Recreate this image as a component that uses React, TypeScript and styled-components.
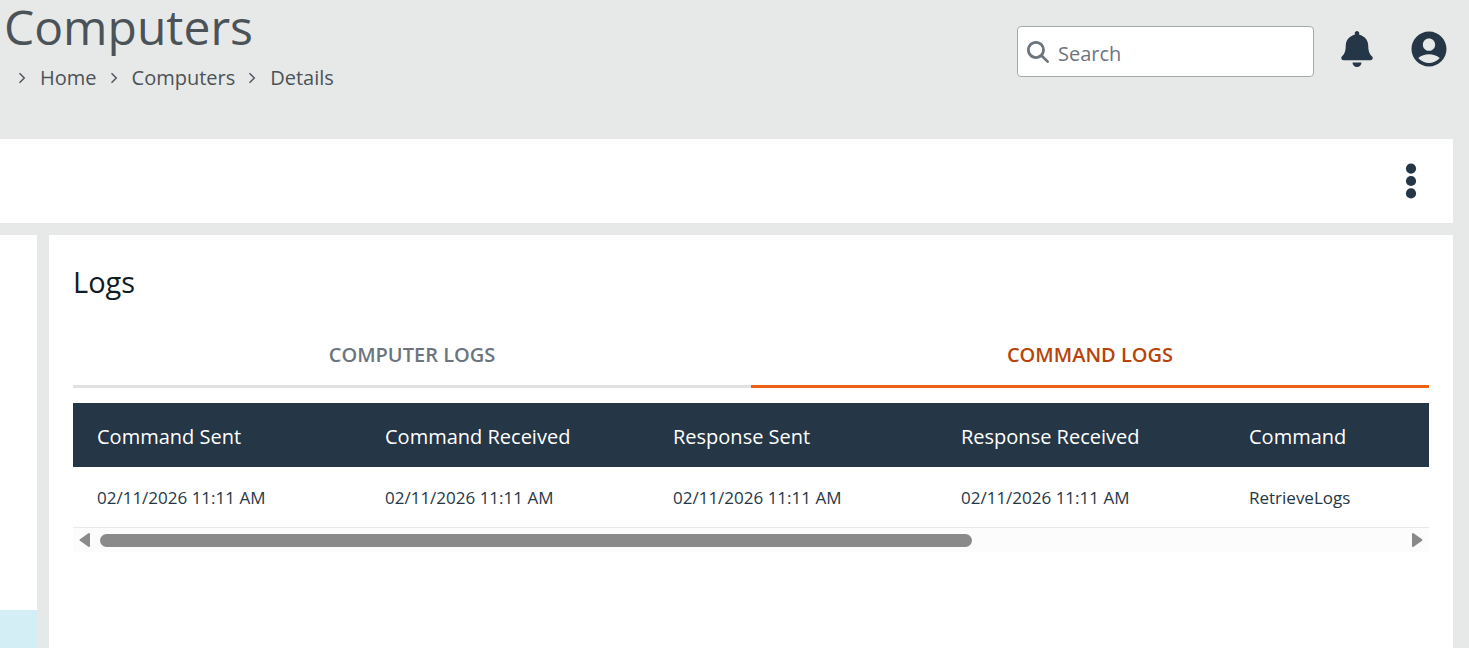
import React from "react";
import styled, { createGlobalStyle } from "styled-components";
import { FaBell } from "react-icons/fa";
import { FaMagnifyingGlass } from "react-icons/fa6";
import { MdAccountCircle } from "react-icons/md";

const ink = "#253746";
const canvas = "#e7e9e8";

const GlobalStyle = createGlobalStyle`
  *, *::before, *::after { box-sizing: border-box; }
  body {
    margin: 0;
    background: ${canvas};
    color: ${ink};
    font-family: "Open Sans", "Noto Sans", sans-serif;
  }
`;

const Page = styled.div`
  display: flex;
  flex-direction: column;
  min-height: 100vh;
  padding-right: 16px;
`;

const Header = styled.header`
  display: flex;
  justify-content: space-between;
  align-items: flex-start;
  height: 139px;
`;

const Heading = styled.div`
  padding-left: 4px;
`;

const Title = styled.h1`
  margin: 0;
  font-size: 48px;
  line-height: 54px;
  font-weight: 400;
  color: #4b5258;
`;

const Crumbs = styled.ol`
  display: flex;
  margin: 0;
  padding: 8px 0 0 12px;
  list-style: none;
`;

const Crumb = styled.li`
  display: flex;
  align-items: center;
  gap: 12px;
  margin-right: 11px;
  font-size: 20px;
  line-height: 32px;
  color: #4b5258;
`;

const CrumbLink = styled.a`
  color: inherit;
  text-decoration: none;
`;

const Tools = styled.div`
  display: flex;
  align-items: center;
  padding: 26px 3px 0 0;
`;

const SearchBox = styled.label`
  display: flex;
  align-items: center;
  gap: 9px;
  width: 297px;
  height: 51px;
  padding: 0 9px;
  border: 1px solid #a5a9ac;
  border-radius: 4px;
  background: #fff;
  color: #6c757d;
`;

const SearchInput = styled.input`
  flex: 1;
  min-width: 0;
  padding: 4px 0 0;
  border: 0;
  outline: 0;
  background: transparent;
  font: 20px "Open Sans", sans-serif;
  color: ${ink};
  &::placeholder {
    color: #6c757d;
    opacity: 1;
  }
`;

const HeaderIcons = styled.div`
  display: flex;
  align-items: center;
  gap: 33px;
  margin-left: 25px;
  padding-bottom: 6px;
`;

const IconButton = styled.button`
  display: flex;
  align-items: center;
  justify-content: center;
  padding: 0;
  border: 0;
  background: transparent;
  color: ${ink};
  cursor: pointer;
`;

const ActionBar = styled.section`
  display: flex;
  justify-content: flex-end;
  align-items: center;
  height: 84px;
  padding-right: 36px;
  background: #fff;
`;

const Columns = styled.div`
  display: flex;
  flex: 1;
  gap: 12px;
  margin-top: 12px;
`;

const SidePanel = styled.aside`
  width: 37px;
  padding-top: 375px;
  display: flex;
  background: #fff;
`;

const SideSelected = styled.div`
  flex: 1;
  background: #d3eff5;
`;

const LogsPanel = styled.main`
  flex: 1;
  min-width: 0;
  padding: 24px;
  background: #fff;
`;

const PanelTitle = styled.h2`
  margin: 0;
  font-size: 29px;
  line-height: 46px;
  font-weight: 400;
  color: #0f1c26;
`;

const Tabs = styled.div`
  display: flex;
  margin: 18px 0 15px;
`;

const Tab = styled.button<{ $active?: boolean }>`
  flex: 1;
  height: 65px;
  padding: 0;
  border: 0;
  border-bottom: 3px solid ${(p) => (p.$active ? "#ea6212" : "#dfe1e3")};
  background: transparent;
  font: 600 20px "Open Sans", sans-serif;
  color: ${(p) => (p.$active ? "#b8430b" : "#6c757d")};
  cursor: pointer;
`;

const TableViewport = styled.div`
  overflow: hidden;
`;

const Table = styled.table`
  width: 1440px;
  table-layout: fixed;
  border-collapse: separate;
  border-spacing: 0;
`;

const HeadCell = styled.th`
  height: 64px;
  padding: 2px 24px 0;
  background: ${ink};
  color: #fff;
  font-size: 20px;
  font-weight: 400;
  text-align: left;
`;

const Cell = styled.td`
  height: 61px;
  padding: 0 24px;
  border-bottom: 1px solid #e8e9ea;
  font-size: 17px;
  white-space: nowrap;
`;

const ScrollBar = styled.div`
  display: flex;
  align-items: center;
  height: 24px;
  padding: 0 6px;
  background: #fcfcfc;
`;

const ScrollTrack = styled.div`
  flex: 1;
  margin: 0 9px;
`;

const ScrollThumb = styled.div`
  width: 67%;
  height: 13px;
  border-radius: 7px;
  background: #8a8a8a;
`;

const crumbs = ["Home", "Computers", "Details"];
const columns = ["Command Sent", "Command Received", "Response Sent", "Response Received", "Command"];
const rows = [
  ["02/11/2026 11:11 AM", "02/11/2026 11:11 AM", "02/11/2026 11:11 AM", "02/11/2026 11:11 AM", "RetrieveLogs"],
];

const Chevron = () => (
  <svg width="12" height="12" viewBox="0 0 12 12" fill="none" stroke="currentColor" strokeWidth="1.4" aria-hidden="true">
    <path d="M3.5 1.2 8.3 6l-4.8 4.8" />
  </svg>
);

const Kebab = () => (
  <svg width="12" height="36" viewBox="0 0 12 36" fill="currentColor" aria-hidden="true">
    <circle cx="6" cy="5.6" r="5.1" />
    <circle cx="6" cy="18" r="5.1" />
    <circle cx="6" cy="30.4" r="5.1" />
  </svg>
);

const ScrollArrow = ({ left }: { left?: boolean }) => (
  <svg width="12" height="16" viewBox="0 0 12 16" fill="#8a8a8a" stroke="#8a8a8a" strokeWidth="2" strokeLinejoin="round" aria-hidden="true">
    <path d={left ? "M10 2v12L1.5 8Z" : "M2 2v12l8.5-6Z"} />
  </svg>
);

export default function App() {
  return (
    <>
      <GlobalStyle />
      <Page>
        <Header>
          <Heading>
            <Title>Computers</Title>
            <nav aria-label="Breadcrumb">
              <Crumbs>
                {crumbs.map((name) => (
                  <Crumb key={name}>
                    <Chevron />
                    <CrumbLink href="#">{name}</CrumbLink>
                  </Crumb>
                ))}
              </Crumbs>
            </nav>
          </Heading>
          <Tools>
            <SearchBox>
              <FaMagnifyingGlass size={22} aria-hidden="true" />
              <SearchInput type="search" placeholder="Search" aria-label="Search" />
            </SearchBox>
            <HeaderIcons>
              <IconButton aria-label="Notifications">
                <FaBell size={36} />
              </IconButton>
              <IconButton aria-label="Account">
                <MdAccountCircle size={42} />
              </IconButton>
            </HeaderIcons>
          </Tools>
        </Header>

        <ActionBar>
          <IconButton aria-label="More actions">
            <Kebab />
          </IconButton>
        </ActionBar>

        <Columns>
          <SidePanel>
            <SideSelected />
          </SidePanel>
          <LogsPanel>
            <PanelTitle>Logs</PanelTitle>
            <Tabs role="tablist">
              <Tab role="tab" aria-selected={false}>COMPUTER LOGS</Tab>
              <Tab role="tab" aria-selected $active>COMMAND LOGS</Tab>
            </Tabs>
            <TableViewport>
              <Table>
                <thead>
                  <tr>
                    {columns.map((c) => (
                      <HeadCell key={c} scope="col">{c}</HeadCell>
                    ))}
                  </tr>
                </thead>
                <tbody>
                  {rows.map((row, r) => (
                    <tr key={r}>
                      {row.map((value, i) => (
                        <Cell key={i}>{value}</Cell>
                      ))}
                    </tr>
                  ))}
                </tbody>
              </Table>
            </TableViewport>
            <ScrollBar>
              <ScrollArrow left />
              <ScrollTrack>
                <ScrollThumb />
              </ScrollTrack>
              <ScrollArrow />
            </ScrollBar>
          </LogsPanel>
        </Columns>
      </Page>
    </>
  );
}
